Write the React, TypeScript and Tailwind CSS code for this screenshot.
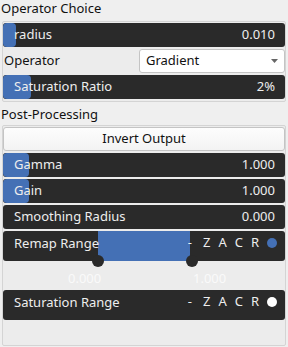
import React from "react";

const font = { fontFamily: '"Noto Sans", "Open Sans", sans-serif' };

function SliderBar({
  label,
  value,
  fill,
}: {
  label: string;
  value: string;
  fill?: number;
}) {
  return (
    <div className="relative flex h-[24px] items-center justify-between overflow-hidden rounded-[3px] bg-[#2a2a2a] pl-[11px] pr-[10px] text-[13px] text-[#eeeeee]">
      {fill ? (
        <div
          className="absolute left-0 top-0 h-full rounded-[4px] bg-[#4470b5]"
          style={{ width: fill }}
        />
      ) : null}
      <span className="relative">{label}</span>
      <span className="relative">{value}</span>
    </div>
  );
}

function RangeBar({
  label,
  dot,
  range,
}: {
  label: string;
  dot: string;
  range?: boolean;
}) {
  return (
    <div className="relative h-[30px] rounded-[3px] bg-[#2a2a2a] text-[13px] text-[#eeeeee]">
      {range && (
        <>
          <div className="absolute left-[95px] top-0 h-full w-[92px] bg-[#4470b5]" />
          <div className="absolute left-[89px] top-[24px] h-[12px] w-[12px] rounded-full bg-[#2a2a2a]" />
          <div className="absolute left-[183px] top-[24px] h-[12px] w-[12px] rounded-full bg-[#2a2a2a]" />
        </>
      )}
      <div className="relative flex h-[24px] items-center pl-[11px] pr-[8px]">
        <span className="mt-[1px]">{label}</span>
        <div className="ml-auto flex items-center gap-[8px]">
          <span className="mr-[3px]">-</span>
          <span>Z</span>
          <span>A</span>
          <span>C</span>
          <span>R</span>
          <span className={`h-[10px] w-[10px] rounded-full ${dot}`} />
        </div>
      </div>
    </div>
  );
}

export default function App() {
  return (
    <div
      className="h-[347px] w-[288px] overflow-hidden bg-[#efefef] text-[13px] text-[#111111]"
      style={font}
    >
      <div className="flex h-[21px] items-center pl-[1px] pb-[3px]">Operator Choice</div>
      <div className="mx-[2px] flex flex-col gap-[2px] rounded-[2px] border border-[#d4d4d4] bg-[#ececec] pb-[2px] pt-[1px]">
        <SliderBar label="radius" value="0.010" fill={13} />
        <div className="flex h-[24px] items-center">
          <span className="w-[136px] pl-[1px]">Operator</span>
          <div className="flex h-[24px] flex-1 items-center justify-between rounded-[3px] border border-[#c4c4c4] bg-white pl-[6px] pr-[6px]">
            <span>Gradient</span>
            <svg width="7" height="4" viewBox="0 0 7 4">
              <path d="M0 0h7L3.5 4z" fill="#666" />
            </svg>
          </div>
        </div>
        <SliderBar label="Saturation Ratio" value="2%" fill={28} />
      </div>
      <div className="flex h-[23px] items-center pl-[1px] pt-[2px]">Post-Processing</div>
      <div className="mx-[2px] flex h-[221px] flex-col gap-[2px] rounded-[2px] border border-[#d4d4d4] bg-[#ececec] pt-[1px]">
        <div className="flex h-[24px] items-center justify-center rounded-[3px] border border-[#c4c4c4] bg-gradient-to-b from-[#fdfdfd] to-[#f3f3f3]">
          Invert Output
        </div>
        <SliderBar label="Gamma" value="1.000" fill={26} />
        <SliderBar label="Gain" value="1.000" fill={26} />
        <SliderBar label="Smoothing Radius" value="0.000" />
        <RangeBar label="Remap Range" dot="bg-[#4470b5]" range />
        <div className="relative h-[25px] text-[13px] text-[#fafafa]">
          <span className="absolute left-[65px] top-[9px] leading-none">0.000</span>
          <span className="absolute left-[190px] top-[9px] leading-none">1.000</span>
        </div>
        <RangeBar label="Saturation Range" dot="bg-white" />
      </div>
    </div>
  );
}
